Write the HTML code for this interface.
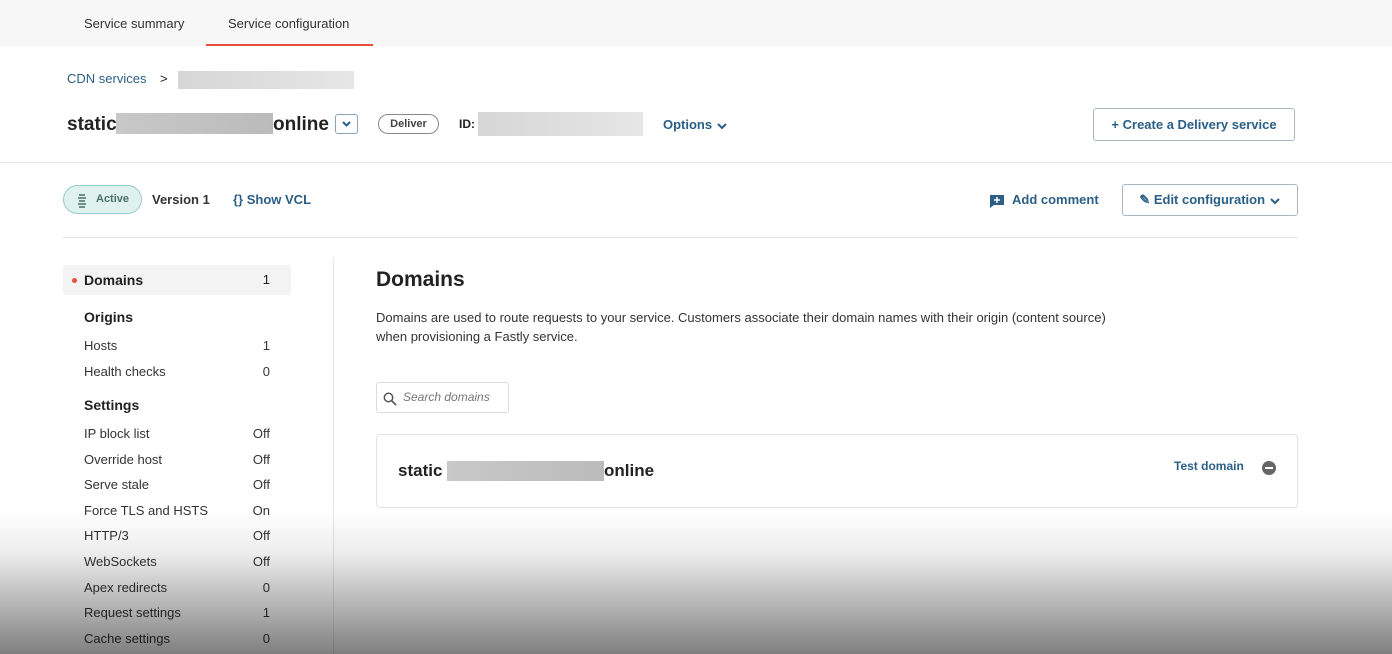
<!DOCTYPE html>
<html><head><meta charset="utf-8"><style>
*{margin:0;padding:0;box-sizing:border-box}
body{width:1392px;height:654px;overflow:hidden;background:#fff;font-family:"Liberation Sans",sans-serif;color:#222;position:relative}
.abs{position:absolute}
.blue{color:#2b5f86}
.gray{background:linear-gradient(90deg,#d6d6d6,#e6e6e6)}
.side div{position:absolute;left:84px;width:186px;font-size:13px;color:#333}
.side span{float:right}
svg{display:inline-block;vertical-align:middle}
</style></head><body>
<div class="abs" style="left:0;top:0;width:1392px;height:46px;background:#f7f7f7"></div>
<div class="abs" style="left:84px;top:16px;font-size:13px;color:#333">Service summary</div>
<div class="abs" style="left:228px;top:16px;font-size:13px;color:#333">Service configuration</div>
<div class="abs" style="left:206px;top:44px;width:167px;height:2px;background:#e8503e"></div>

<div class="abs blue" style="left:67px;top:71px;font-size:13px">CDN services</div>
<div class="abs" style="left:160px;top:71px;font-size:13px">&gt;</div>
<div class="abs gray" style="left:178px;top:71px;width:176px;height:18px"></div>

<div class="abs" style="left:67px;top:114px;font-size:19px;font-weight:bold">static</div>
<div class="abs" style="left:116px;top:113px;width:157px;height:21px;background:linear-gradient(90deg,#c8c8c8,#bbb)"></div>
<div class="abs" style="left:273px;top:114px;font-size:19px;font-weight:bold">online</div>
<div class="abs" style="left:335px;top:114px;width:23px;height:20px;border:1px solid #8aa3b8;border-radius:3px"><svg width="21" height="18" viewBox="0 0 21 18"><path d="M7 7l3.5 3.5L14 7" stroke="#2b5f86" stroke-width="2" fill="none"/></svg></div>
<div class="abs" style="left:378px;top:114px;width:61px;height:20px;border:1px solid #888;border-radius:10px;font-size:11px;text-align:center;line-height:18px;font-weight:bold;color:#444">Deliver</div>
<div class="abs" style="left:459px;top:117px;font-size:12px;font-weight:bold">ID:</div>
<div class="abs gray" style="left:478px;top:112px;width:165px;height:24px"></div>
<div class="abs blue" style="left:663px;top:117px;font-size:13px;font-weight:bold">Options <svg width="12" height="10" viewBox="0 0 12 10"><path d="M2 3l4 4 4-4" stroke="#2b5f86" stroke-width="2" fill="none"/></svg></div>
<div class="abs blue" style="left:1093px;top:108px;width:202px;height:33px;border:1px solid #aab8c4;border-radius:3px;font-size:13px;font-weight:bold;line-height:31px;text-align:center">+ Create a Delivery service</div>
<div class="abs" style="left:0;top:162px;width:1392px;height:1px;background:#e6e6e6"></div>

<div class="abs" style="left:63px;top:185px;width:79px;height:29px;border:1px solid #9cc;border-radius:15px;background:#dff2ee;font-size:11px;font-weight:bold;color:#4a6e68;line-height:27px;padding-left:32px">Active</div>
<div class="abs" style="left:76px;top:192px"><svg width="12" height="16" viewBox="0 0 12 16"><path d="M3 2h6M2 5h8M3 8h6M2 11h8M3 14h6" stroke="#4a6e68" stroke-width="1.5" fill="none"/></svg></div>
<div class="abs" style="left:152px;top:192px;font-size:13px;font-weight:bold;color:#333">Version 1</div>
<div class="abs blue" style="left:233px;top:192px;font-size:13px;font-weight:bold">{} Show VCL</div>
<div class="abs" style="left:990px;top:193px"><svg width="14" height="13" viewBox="0 0 14 13"><path d="M0 0h14v10H4l-4 3z" fill="#2b5f86"/><path d="M7 2v6M4 5h6" stroke="#fff" stroke-width="1.5"/></svg></div>
<div class="abs blue" style="left:1012px;top:192px;font-size:13px;font-weight:bold">Add comment</div>
<div class="abs blue" style="left:1122px;top:184px;width:176px;height:32px;border:1px solid #aab8c4;border-radius:3px;font-size:13px;font-weight:bold;line-height:30px;text-align:center">&#9998; Edit configuration <svg width="12" height="10" viewBox="0 0 12 10"><path d="M2 3l4 4 4-4" stroke="#2b5f86" stroke-width="2" fill="none"/></svg></div>
<div class="abs" style="left:63px;top:237px;width:1235px;height:1px;background:#e3e3e3"></div>

<div class="abs" style="left:63px;top:265px;width:228px;height:30px;background:#f3f3f3;border-radius:3px"></div>
<div class="abs" style="left:72px;top:278px;width:5px;height:5px;border-radius:50%;background:#e8503e"></div>
<div class="side">
<div style="top:272px;font-size:14px;font-weight:bold;color:#222">Domains<span style="font-weight:normal;font-size:13px">1</span></div>
<div style="top:309px;font-size:14px;font-weight:bold;color:#222">Origins</div>
<div style="top:338px">Hosts<span>1</span></div>
<div style="top:364px">Health checks<span>0</span></div>
<div style="top:397px;font-size:14px;font-weight:bold;color:#222">Settings</div>
<div style="top:426px">IP block list<span>Off</span></div>
<div style="top:452px">Override host<span>Off</span></div>
<div style="top:477px">Serve stale<span>Off</span></div>
<div style="top:503px">Force TLS and HSTS<span>On</span></div>
<div style="top:528px">HTTP/3<span>Off</span></div>
<div style="top:554px">WebSockets<span>Off</span></div>
<div style="top:580px">Apex redirects<span>0</span></div>
<div style="top:605px">Request settings<span>1</span></div>
<div style="top:631px">Cache settings<span>0</span></div>
</div>
<div class="abs" style="left:333px;top:258px;width:1px;height:396px;background:#e6e6e6"></div>

<div class="abs" style="left:376px;top:268px;font-size:21px;font-weight:bold">Domains</div>
<div class="abs" style="left:376px;top:308px;font-size:13px;line-height:19px;color:#333">Domains are used to route requests to your service. Customers associate their domain names with their origin (content source)<br>when provisioning a Fastly service.</div>
<div class="abs" style="left:376px;top:382px;width:133px;height:31px;border:1px solid #ddd;border-radius:3px;font-size:12px;font-style:italic;color:#777;line-height:29px;padding-left:26px">Search domains</div>
<div class="abs" style="left:383px;top:390px"><svg width="14" height="14" viewBox="0 0 14 14"><circle cx="5.5" cy="5.5" r="4.2" stroke="#555" stroke-width="1.5" fill="none"/><path d="M8.5 8.5L13 13" stroke="#555" stroke-width="1.6"/></svg></div>
<div class="abs" style="left:376px;top:434px;width:922px;height:74px;border:1px solid #e3e3e3;border-radius:4px"></div>
<div class="abs" style="left:398px;top:461px;font-size:17px;font-weight:bold">static</div>
<div class="abs" style="left:447px;top:461px;width:157px;height:20px;background:linear-gradient(90deg,#c8c8c8,#bbb)"></div>
<div class="abs" style="left:604px;top:461px;font-size:17px;font-weight:bold">online</div>
<div class="abs blue" style="left:1174px;top:459px;font-size:12px;font-weight:bold">Test domain</div>
<div class="abs" style="left:1262px;top:461px;width:14px;height:14px;border-radius:50%;background:#666"></div>
<div class="abs" style="left:1265px;top:467px;width:8px;height:2px;background:#fff"></div>

<div class="abs" style="left:0;top:510px;width:1392px;height:144px;background:linear-gradient(to bottom,rgba(0,0,0,0),rgba(0,0,0,0.07) 30%,rgba(0,0,0,0.5))"></div>
</body></html>
